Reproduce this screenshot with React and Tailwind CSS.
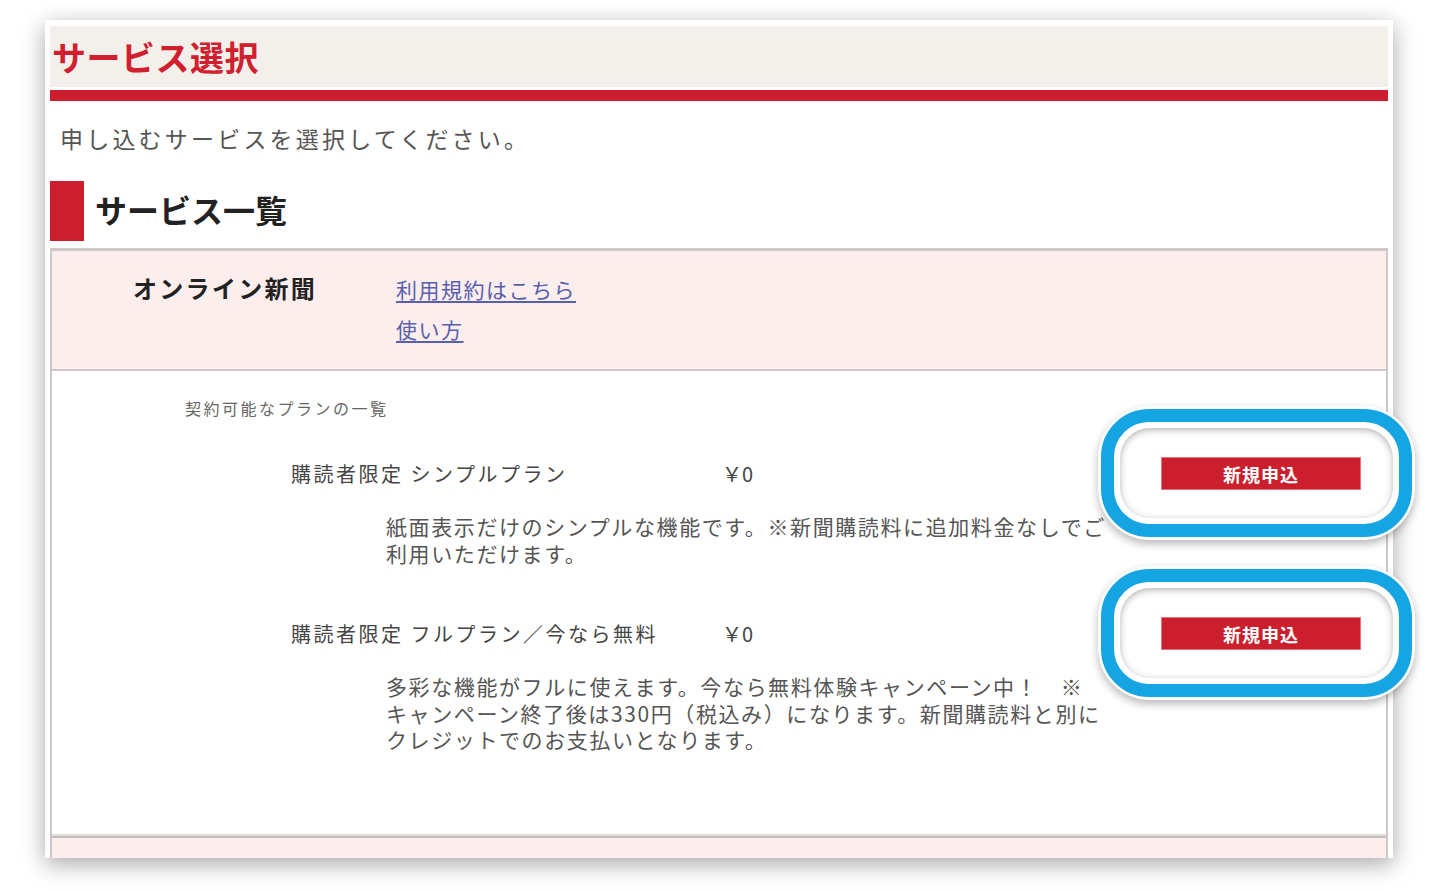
const FONT = '"Noto Sans CJK JP", "Noto Sans", sans-serif'

const plans = [
  {
    name: '購読者限定 シンプルプラン',
    price: '￥0',
    lines: ['紙面表示だけのシンプルな機能です。※新聞購読料に追加料金なしでご', '利用いただけます。'],
  },
  {
    name: '購読者限定 フルプラン／今なら無料',
    price: '￥0',
    lines: [
      '多彩な機能がフルに使えます。今なら無料体験キャンペーン中！　※',
      'キャンペーン終了後は330円（税込み）になります。新聞購読料と別に',
      'クレジットでのお支払いとなります。',
    ],
  },
]

function Highlight() {
  return (
    <div className="absolute -left-[63px] -right-[54px] -top-[51px] -bottom-[50px] rounded-[52px] bg-white p-[3px] shadow-[0_4px_8px_rgba(0,0,0,0.28)]">
      <div className="h-full rounded-[48px] border-[13px] border-[#16a5e3] bg-white p-[6px]">
        <div className="h-full rounded-[30px] bg-white shadow-[inset_0_2px_7px_rgba(0,0,0,0.3)]" />
      </div>
    </div>
  )
}

function PlanRow({ plan, className }) {
  return (
    <div className={className}>
      <div className="flex items-center">
        <div className="w-[431px] text-[20px] text-[#444] tracking-[2.5px]">{plan.name}</div>
        <div className="flex-1 text-[20px] text-[#444]">{plan.price}</div>
        <div className="relative mr-[25px]">
          <Highlight />
          <button className="relative z-10 w-[200px] h-[33px] bg-[#cc1f2d] border border-[#e6747c] text-white text-[18px] font-bold tracking-[1px] leading-none">
            新規申込
          </button>
        </div>
      </div>
      <p className="ml-[95px] mt-[23px] text-[21px] leading-[26.5px] text-[#555] tracking-[1.6px] whitespace-nowrap">
        {plan.lines.map((l, i) => (
          <span key={l}>
            {i > 0 && <br />}
            {l}
          </span>
        ))}
      </p>
    </div>
  )
}

export default function App() {
  return (
    <div className="w-[1439px] h-[891px] bg-white overflow-hidden" style={{ fontFamily: FONT }}>
      <div className="ml-[45px] mt-[20px] w-[1348px] h-[838px] bg-white px-[5px] pt-[6px] shadow-[0_6px_22px_rgba(0,0,0,0.35)] flex flex-col">
        {/* header */}
        <div className="h-[61px] bg-[#f3efea] flex items-center pl-[2px]">
          <h1 className="text-[34px] font-bold text-[#d0202f] tracking-[0.5px] leading-none">サービス選択</h1>
        </div>
        <div className="mt-[3px] h-[11px] bg-[#cc1f2d]" />

        <p className="mt-[26px] ml-[10px] text-[23px] text-[#555] tracking-[3.2px] leading-none">
          申し込むサービスを選択してください。
        </p>

        <div className="mt-[31px] flex items-center h-[60px]">
          <div className="w-[34px] h-full bg-[#cc1f2d]" />
          <h2 className="ml-[11px] -mt-[4px] text-[32px] font-bold text-[#222] leading-none">サービス一覧</h2>
        </div>

        {/* table */}
        <div className="mt-[7px] flex-1 border-l-[2px] border-r-[2px] border-t-[3px] border-[#ccc8c8] flex flex-col">
          <div className="h-[118px] bg-[#fdeeee] flex pt-[18px]">
            <div className="ml-[81px] w-[263px] text-[24px] font-bold text-[#222] leading-[38px] tracking-[2.3px]">オンライン新聞</div>
            <div className="flex flex-col text-[21px] leading-[40px] text-[#5860ad] tracking-[1.5px]">
              <a href="#" className="underline underline-offset-[3px]">利用規約はこちら</a>
              <a href="#" className="underline underline-offset-[3px] w-fit">使い方</a>
            </div>
          </div>
          <div className="h-[2px] bg-[#ccc8c8]" />
          <div className="flex-1 bg-white pt-[25px]">
            <div className="ml-[133px] text-[16px] text-[#666] tracking-[2.5px]">契約可能なプランの一覧</div>
            <PlanRow plan={plans[0]} className="ml-[239px] mt-[37px]" />
            <PlanRow plan={plans[1]} className="ml-[239px] mt-[51px]" />
          </div>
          <div className="h-[2px] bg-[#e2dede]" />
          <div className="h-[2px] bg-[#c4c0c0]" />
          <div className="h-[20px] bg-[#fdeeee]" />
        </div>
      </div>
    </div>
  )
}
